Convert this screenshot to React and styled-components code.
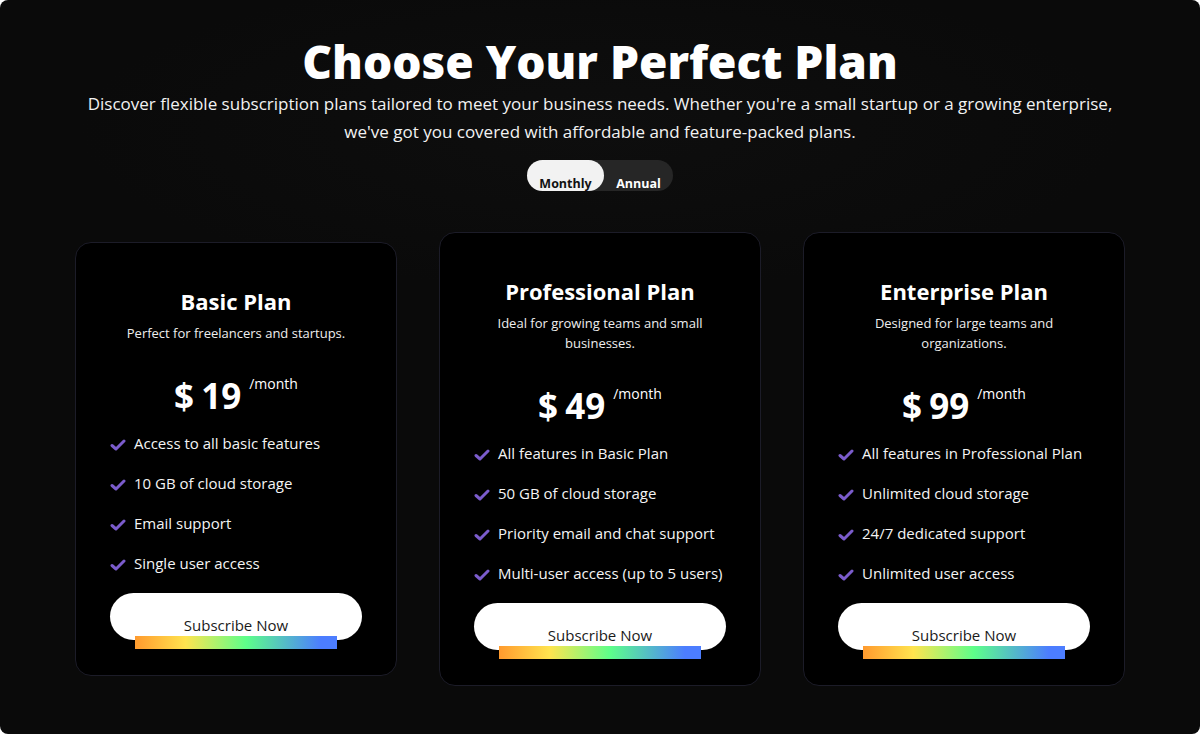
import { useState } from 'react';
import styled, { createGlobalStyle } from 'styled-components';

const GlobalStyle = createGlobalStyle`
  html, body {
    margin: 0;
    padding: 0;
    background: #ffffff;
  }
  * {
    box-sizing: border-box;
  }
`;

const plans = [
  {
    name: 'Basic Plan',
    desc: 'Perfect for freelancers and startups.',
    price: 19,
    features: [
      'Access to all basic features',
      '10 GB of cloud storage',
      'Email support',
      'Single user access',
    ],
  },
  {
    name: 'Professional Plan',
    desc: 'Ideal for growing teams and small businesses.',
    price: 49,
    features: [
      'All features in Basic Plan',
      '50 GB of cloud storage',
      'Priority email and chat support',
      'Multi-user access (up to 5 users)',
    ],
  },
  {
    name: 'Enterprise Plan',
    desc: 'Designed for large teams and organizations.',
    price: 99,
    features: [
      'All features in Professional Plan',
      'Unlimited cloud storage',
      '24/7 dedicated support',
      'Unlimited user access',
    ],
  },
];

const Page = styled.main`
  width: 1200px;
  height: 734px;
  border-radius: 8px;
  overflow: hidden;
  background: radial-gradient(ellipse 520px 160px at 50% 130px, #0e0e0e 0%, #0a0a0a 100%);
  font-family: 'Open Sans', 'Noto Sans', sans-serif;
  color: #ffffff;
  display: flex;
  flex-direction: column;
  align-items: center;
  padding-top: 32px;
`;

const Title = styled.h1`
  margin: 0;
  font-family: 'Open Sans', Lato, sans-serif;
  font-weight: 800;
  font-size: 46px;
  line-height: 58px;
`;

const Subtitle = styled.p`
  margin: 0;
  max-width: 1060px;
  text-align: center;
  font-size: 17px;
  line-height: 28px;
  color: #f2f2f2;
`;

const Toggle = styled.div`
  margin-top: 14px;
  display: flex;
  background: #262626;
  border-radius: 16px;
  height: 31px;
`;

const ToggleButton = styled.button`
  border: none;
  border-radius: 16px;
  font-family: 'Open Sans', sans-serif;
  font-weight: 700;
  font-size: 12.5px;
  padding: 15px 12px 0;
  line-height: 18px;
  cursor: pointer;
  width: ${p => p.$w}px;
  background: ${p => (p.$active ? '#f2f2f2' : 'transparent')};
  color: ${p => (p.$active ? '#111111' : '#ffffff')};
`;

const Cards = styled.section`
  margin-top: 41px;
  display: flex;
  align-items: center;
  gap: 42px;
`;

const Card = styled.article`
  width: 322px;
  background: #000000;
  border: 1px solid #1c1c28;
  border-radius: 16px;
  padding: 43px 34px 35px;
  display: flex;
  flex-direction: column;
  align-items: center;
`;

const PlanName = styled.h2`
  margin: 0;
  font-size: 22px;
  font-weight: 700;
  line-height: 30px;
`;

const PlanDesc = styled.p`
  margin: 7px 0 0;
  max-width: 236px;
  text-align: center;
  font-size: 13px;
  line-height: 20px;
  color: #eeeeee;
`;

const PriceRow = styled.div`
  margin-top: 31px;
  display: flex;
  align-items: flex-start;
`;

const Amount = styled.span`
  font-size: 35px;
  font-weight: 700;
  line-height: 44px;
  word-spacing: -2px;
`;

const Period = styled.span`
  margin-left: 8px;
  font-size: 14px;
  line-height: 20px;
`;

const Features = styled.ul`
  list-style: none;
  margin: 14px 0 0;
  padding: 0;
  align-self: stretch;
  display: flex;
  flex-direction: column;
  gap: 18px;
`;

const Feature = styled.li`
  display: flex;
  align-items: center;
  gap: 8px;
  font-size: 15px;
  line-height: 22px;
  color: #f4f4f4;
`;

const CheckIcon = styled.svg`
  width: 16px;
  height: 16px;
  flex-shrink: 0;
  margin-top: 3px;
`;

const Subscribe = styled.button`
  position: relative;
  margin-top: 19px;
  align-self: stretch;
  height: 47px;
  border: none;
  border-radius: 24px;
  background: #ffffff;
  color: #1a1a1a;
  font-family: 'Open Sans', sans-serif;
  font-size: 15px;
  padding: 16px 0 0;
  cursor: pointer;

  &::after {
    content: '';
    position: absolute;
    left: 10%;
    width: 80%;
    bottom: -9px;
    height: 13px;
    background: linear-gradient(90deg, #ff9a2e 0%, #ffe44f 25%, #5dff8a 55%, #4c7dff 92%);
  }
`;

const Check = () => (
  <CheckIcon viewBox="0 0 16 16">
    <path d="M2 8.5 L6 12 L14 4" fill="none" stroke="#7b5ccc" strokeWidth="3" strokeLinecap="round" strokeLinejoin="round" />
  </CheckIcon>
);

export default function App() {
  const [billing, setBilling] = useState('monthly');

  return (
    <>
      <GlobalStyle />
      <Page>
        <Title>Choose Your Perfect Plan</Title>
        <Subtitle>
          Discover flexible subscription plans tailored to meet your business needs. Whether you're a small startup or a growing enterprise, we've got you covered with affordable and feature-packed plans.
        </Subtitle>
        <Toggle>
          <ToggleButton $w={77} $active={billing === 'monthly'} onClick={() => setBilling('monthly')}>
            Monthly
          </ToggleButton>
          <ToggleButton $w={69} $active={billing === 'annual'} onClick={() => setBilling('annual')}>
            Annual
          </ToggleButton>
        </Toggle>
        <Cards>
          {plans.map(plan => (
            <Card key={plan.name}>
              <PlanName>{plan.name}</PlanName>
              <PlanDesc>{plan.desc}</PlanDesc>
              <PriceRow>
                <Amount>$ {plan.price}</Amount>
                <Period>/month</Period>
              </PriceRow>
              <Features>
                {plan.features.map(f => (
                  <Feature key={f}>
                    <Check />
                    {f}
                  </Feature>
                ))}
              </Features>
              <Subscribe>Subscribe Now</Subscribe>
            </Card>
          ))}
        </Cards>
      </Page>
    </>
  );
}
